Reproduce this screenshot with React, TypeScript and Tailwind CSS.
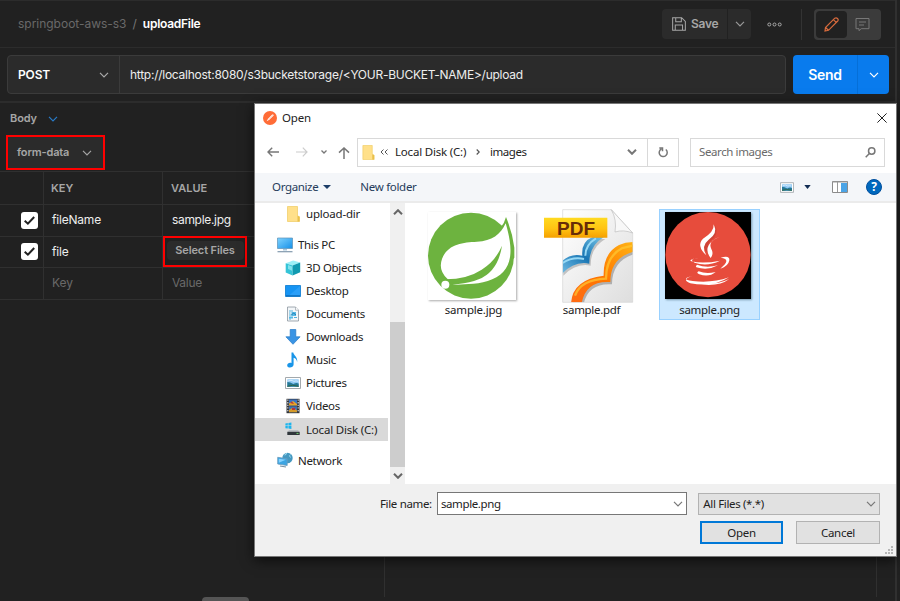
import React from "react";

type IconProps = { className?: string };

const Chevron = ({ className = "" }: IconProps) => (
  <svg viewBox="0 0 10 6" className={`h-[6px] w-[10px] shrink-0 fill-none stroke-current ${className}`} strokeWidth="1.2">
    <path d="M1 .8 5 4.8 9 .8" />
  </svg>
);

const PostmanLogo = () => (
  <svg viewBox="0 0 14 14" className="h-[14px] w-[14px] shrink-0">
    <circle cx="7" cy="7" r="7" fill="#ff6c37" />
    <path d="M3.6 10.2 5 7.7 9.2 3.6Q10.6 3 10.7 4.4L6.3 8.8Z" fill="#fff" />
    <path d="m5.3 8.4 4.6-4.3" stroke="#ffb59a" strokeWidth=".5" />
  </svg>
);

const FolderIcon = ({ className = "" }: IconProps) => (
  <svg viewBox="0 0 13 16" className={`shrink-0 ${className}`}>
    <path d="M.5.5h10v9.3l2 1v4.7H.5z" fill="#ffe08a" stroke="#efcc62" strokeWidth=".7" />
    <path d="M10.5 9.8v5.7h2v-4.7z" fill="#e9c04b" />
  </svg>
);

const PcIcon = () => (
  <svg viewBox="0 0 16 16" className="h-4 w-4">
    <defs>
      <linearGradient id="pc" x1="0" y1="0" x2="1" y2="1">
        <stop offset="0" stopColor="#7fd3ff" /><stop offset="1" stopColor="#1590e8" />
      </linearGradient>
    </defs>
    <path d="M.5 1h15v10.5H.5z" fill="url(#pc)" stroke="#5b8fb5" strokeWidth=".7" />
    <path d="M6 12h4v1.5H6z" fill="#a9c6da" /><path d="M.5 14.7h15" stroke="#8299ad" strokeWidth="1.2" />
  </svg>
);
const CubeIcon = () => (
  <svg viewBox="0 0 16 16" className="h-4 w-4">
    <path d="m.7 3.3 7.5-2.8 7 2L7.6 5.6z" fill="#9df0f7" />
    <path d="M.7 3.3 7.6 5.6v10L.7 12.6z" fill="#35c4d7" />
    <path d="M7.6 5.6 15.2 2.5v9.7l-7.6 3.4z" fill="#119ab0" />
    <path d="m3 5 4 1.5v4.2L3 9z" fill="#b4f6fb" opacity=".6" />
  </svg>
);
const DesktopIcon = () => (
  <svg viewBox="0 0 16 16" className="h-4 w-4">
    <path d="M.5 2.500h15v11H.5z" fill="#1694f3" stroke="#0879cf" strokeWidth=".8" />
    <path d="M15 3v9.500L4 12.500z" fill="#42adff" opacity=".45" /><path d="M1 12.800h14" stroke="#075ea6" strokeWidth=".8" />
  </svg>
);
const DocumentIcon = () => (
  <svg viewBox="0 0 16 16" className="h-4 w-4">
    <path d="M2.500 1h8L13.500 4.200V15h-11z" fill="#f4f7f9" stroke="#8b969e" strokeWidth=".8" />
    <path d="M10.500 1v3.200h3" fill="#fff" stroke="#8b969e" strokeWidth=".6" />
    <path d="M4 5h4M4 7h1.500M4 9h3M9 11.500h3M4 13h2" stroke="#57b3dd" strokeWidth="1.100" />
    <path d="M6.500 6H11v4H6.500zM4 10.500h4v2H4z" fill="#55b9e6" /><path d="m6.500 9 2-2 2.500 2" stroke="#217caf" fill="none" />
  </svg>
);
const DownloadIcon = () => (
  <svg viewBox="0 0 16 16" className="h-4 w-4">
    <path d="M5.2.5h5.6v7.3h4.3L8 15.3.9 7.8h4.3z" fill="#3a94e4" stroke="#2478c7" strokeWidth=".7" />
  </svg>
);
const MusicIcon = () => (
  <svg viewBox="0 0 16 16" className="h-4 w-4">
    <path d="M6.500.5h1.800c.3 3 4.700 4.200 3.800 9.500-.4-2.700-1.800-3.800-3.500-4.200v6.700c0 3.700-6.400 4.100-6.400.9 0-2.200 2.300-3.300 4.300-2.500z" fill="#1995e8" />
  </svg>
);
const PictureIcon = ({ className = "" }: IconProps) => (
  <svg viewBox="0 0 16 12" className={`shrink-0 ${className}`}>
    <path d="M.5.5h15v11H.5z" fill="#fff" stroke="#a3a9ad" />
    <path d="M2.3 2.3h11.4v7.4H2.3z" fill="#8ec8f3" />
    <path d="M2.3 5q3 .2 6 2 3-1.500 5.400-.5v3.200H2.300z" fill="#257897" />
    <path d="M3 4q3-1.7 6 .3 2-.8 4 0" stroke="#d7edff" fill="none" /><path d="M2.3 9.3q5-2 11.4 0" stroke="#2f6648" fill="none" />
  </svg>
);
const VideoIcon = () => (
  <svg viewBox="0 0 16 16" className="h-4 w-4">
    <path d="M1.5.8h13v14.4h-13z" fill="#32353b" /><path d="M4 1.5h8v6H4z" fill="#3a75c4" /><path d="M4 8.3h8v6H4z" fill="#3f70b3" />
    <path d="m4 5.4 4-2.4 4 3v1.5H4z" fill="#e6a42a" /><path d="m5 5 2-1.5L9 6z" fill="#b7323b" />
    <path d="m4 12 4-2.4 4 3v1.7H4z" fill="#d59b2a" /><path d="M7 10h3v2H7z" fill="#b7323b" />
    <path d="M2.8 1.5v13m10.4-13v13" stroke="#d2d4d6" strokeWidth="1.2" strokeDasharray="1.3 1.3" />
  </svg>
);
const DiskIcon = () => (
  <svg viewBox="0 0 16 16" className="h-4 w-4">
    <path d="m.4 2.4 2.4-.4v2.5H.4zm3-.5 3-.5v3.1h-3zM.4 5.1h2.4v2.5l-2.4-.4zm3 0h3v3l-3-.5z" fill="#1cb5ee" />
    <path d="M4 9h9l1.500 2h-12z" fill="#babfc3" /><path d="M2.300 10.800h12.400v3.200H2.300z" fill="#30363b" />
    <path d="M11.500 12.400h2" stroke="#70d66e" strokeWidth="1" />
  </svg>
);
const NetworkIcon = () => (
  <svg viewBox="0 0 16 16" className="h-4 w-4">
    <circle cx="10.500" cy="6" r="5.200" fill="#4598c0" /><path d="M7.500 3q2 0 2-2m4 1.500q-2 1 0 3" stroke="#9eddf3" strokeWidth="1" fill="none" />
    <path d="m.7 5.3 9.5 1.5v6.7L.7 12z" fill="#3ca5e3" stroke="#6b9cbc" strokeWidth=".8" />
    <path d="m1.8 6.7 7 1.1-7 3z" fill="#85d3ff" /><path d="m3 14 6 1" stroke="#7890a1" strokeWidth="1.2" />
  </svg>
);

const SpringThumb = () => (
  <svg viewBox="54 36 264 264" className="mr-[2px] h-[88px] w-[88px] bg-white shadow-[1px_1px_2px_#aaa]">
    <circle cx="183" cy="167" r="129" fill="#6db33f" />
    <path d="M270 85Q284 69 288 51q19 45 25 92v30l-30 30z" fill="#6db33f" />
    <path d="M112 236Q84 210 96 177c16-44 60-50 105-52 45-1 71-22 86-55 15 51 26 109-7 145-23 25-67 36-104 37l-48 3z" fill="#fff" />
    <path d="M276 137q-12 78-70 101-27 11-61 14-19 2-31 8l-8-22q67-1 109-29 41-25 61-72z" fill="#6db33f" />
    <circle cx="106" cy="254" r="12" fill="#fff" />
  </svg>
);

const PdfThumb = () => (
  <svg viewBox="402 28 270 282" className="mr-[2px] h-[94px] w-[90px]">
    <defs>
      <linearGradient id="page" x1="0" y1="0" x2="1" y2="1"><stop stopColor="#fff" /><stop offset="1" stopColor="#dedede" /></linearGradient>
      <linearGradient id="banner" x1="0" y1="0" x2="0" y2="1"><stop stopColor="#ffda20" /><stop offset=".55" stopColor="#ffc313" /><stop offset="1" stopColor="#f5a000" /></linearGradient>
      <linearGradient id="orange" x1="0" y1="1" x2="1" y2="0"><stop stopColor="#ff6a15" /><stop offset=".45" stopColor="#ff7600" /><stop offset="1" stopColor="#ffb414" /></linearGradient>
      <linearGradient id="blue" x1="0" y1="1" x2="1" y2="0"><stop stopColor="#71bce4" /><stop offset=".5" stopColor="#1976b4" /><stop offset="1" stopColor="#78c6e7" /></linearGradient>
      <clipPath id="pageClip"><path d="M458 30h146l64 70v208H458z" /></clipPath>
    </defs>
    <path d="M458 30h146l64 70v208H458z" fill="url(#page)" stroke="#d4d4d4" strokeWidth="2" />
    <g clipPath="url(#pageClip)">
      <path d="M456 222v-38q27-24 61-16-4-42 31-56h34q-45 26-44 80-44-9-82 30z" fill="#888" opacity=".45" transform="translate(4 6)" />
      <path d="M456 222v-38q27-24 61-16-4-42 31-56h34q-45 26-44 80-44-9-82 30z" fill="url(#blue)" />
      <path d="M458 190q29-19 64-12m4-10q0-33 32-52" stroke="#97d9f5" strokeWidth="6" fill="none" />
      <path d="M483 310q5-71 98-82-2-67 46-92 20-9 46-9v28q-72 19-72 92-73-5-86 63z" fill="#777" opacity=".5" transform="translate(5 7)" />
      <path d="M483 310q5-71 98-82-2-67 46-92 20-9 46-9v28q-72 19-72 92-73-5-86 63z" fill="url(#orange)" />
      <path d="M495 288q17-48 93-51 0-67 49-92l32-7" stroke="#ffc933" strokeWidth="7" fill="none" opacity=".7" />
    </g>
    <path d="m604 30 64 70q-28-11-53-3 6-37-11-67z" fill="#f8f8f8" stroke="#bcbcbc" strokeWidth="2" />
    <path d="M402 54h190v60H402z" fill="url(#banner)" />
    <text x="498" y="105" textAnchor="middle" fontSize="57" fontWeight="700" fill="#662c08" fontFamily="Liberation Sans, sans-serif" textLength="114" lengthAdjust="spacingAndGlyphs">PDF</text>
  </svg>
);

const JavaThumb = () => (
  <svg viewBox="74 37 258 261" className="mr-[3px] h-[87px] w-[86px] bg-black shadow-[1px_1px_2px_#7899ad]">
    <circle cx="203" cy="165" r="128" fill="#e74c3c" />
    <g transform="translate(3 3)" fill="#ac392f" opacity=".4">
      <path d="M221 74q14 28-14 47-17 18 4 44-51-33-14-57 26-14 24-34z" />
    </g>
    <g fill="#fff">
      <path d="M220 74q14 27-15 46-24 19-7 47-31-29-10-50 34-20 32-43z" />
      <path d="M239 111q-38 13-26 37 8 14-2 27-16-20-6-38 9-17 34-26z" />
      <path d="M174 175q-33 5-21 10 36 8 86-2-39 19-76 6-20-10 11-14z" />
      <path d="M241 174q28-8 26 8-3 18-27 25 17-14 18-22 1-9-17-11z" />
      <path d="M170 195q28 11 63 2-31 17-65 6-4-3 2-8zM175 215q23 9 51 2-20 17-49 7-11-4-2-9z" />
      <path d="M160 228q-45 10-3 16 58 7 109-11-48 31-116 18-31-13 10-23zM162 251q65 7 105-13-35 27-105 13z" />
    </g>
  </svg>
);

const tree = [
  { name: "3D Objects", icon: <CubeIcon /> },
  { name: "Desktop", icon: <DesktopIcon /> },
  { name: "Documents", icon: <DocumentIcon /> },
  { name: "Downloads", icon: <DownloadIcon /> },
  { name: "Music", icon: <MusicIcon /> },
  { name: "Pictures", icon: <PictureIcon className="h-3 w-4" /> },
  { name: "Videos", icon: <VideoIcon /> },
  { name: "Local Disk (C:)", icon: <DiskIcon />, selected: true },
];

const CheckCell = ({ checked = false }: { checked?: boolean }) => (
  <div className="flex items-center justify-end border-r border-[#303030] pr-[5px]">
    {checked && (
      <div className="mb-px h-[17px] w-[17px] rounded-[3px] bg-white">
        <svg viewBox="0 0 17 17" className="fill-none stroke-[#222]" strokeWidth="2"><path d="m3.700 8.700 3.200 3 6.300-6.700" /></svg>
      </div>
    )}
  </div>
);

function RequestPane() {
  return (
    <div className="flex h-full w-[897px] flex-col border-r-2 border-[#303030] text-[12px] text-[#eee]">
      <header className="flex h-12 shrink-0 items-center border-y border-[#2c2c2c] pl-[18px] pr-[14px]">
        <span className="tracking-[-0.02px] text-[#696969]">springboot-aws-s3</span>
        <span className="ml-[6px] text-[#777]">/</span>
        <span className="ml-[6px] font-semibold tracking-[-0.26px] text-white">uploadFile</span>
        <div className="ml-auto flex h-[30px] w-[65px] items-center rounded-l bg-[#2b2b2b] pl-[10px] text-[#a6a6a6]">
          <svg viewBox="0 0 15 15" className="h-[14px] w-[14px] fill-none stroke-current" strokeWidth="1.1">
            <path d="M.7.7h9.6l4 4v9.600H.7zM4 .7v4.500h6V.7M3.500 14.300V8.500h7.800v5.800" />
          </svg>
          <span className="ml-[5px] font-semibold tracking-[-0.25px]">Save</span>
        </div>
        <div className="ml-px flex h-[30px] w-[23px] items-center justify-center rounded-r bg-[#2b2b2b] text-[#999]"><Chevron className="w-[9px]" /></div>
        <svg viewBox="0 0 15 5" className="ml-[16px] h-[5px] w-[15px] fill-none stroke-[#aaa]"><circle cx="2.300" cy="2.500" r="1.500" /><circle cx="7.500" cy="2.500" r="1.500" /><circle cx="12.700" cy="2.500" r="1.500" /></svg>
        <div className="ml-[19px] h-[31px] w-px bg-[#333]" />
        <div className="ml-3 flex h-[31px] w-[67px] items-center rounded bg-[#3b3b3b] p-[2px]">
          <div className="flex h-[27px] w-[31px] items-center justify-center rounded bg-[#212121]">
            <svg viewBox="0 0 15 15" className="h-[15px] w-[15px] fill-none stroke-[#d86b3d]" strokeWidth="1.2"><path d="m1 14 .5-3.500L10.800 1.200q1.400-1 2.700.300t.2 2.500L4.500 13.300zM9.400 2.600l3 3M1.500 10.500l3 2.800" /></svg>
          </div>
          <svg viewBox="0 0 15 15" className="ml-[8px] h-[15px] w-[15px] fill-none stroke-[#787878]"><path d="M1 1.500h13v10.200H6.200L4 13.700v-2H1zM4 5h7M4 8h5" /></svg>
        </div>
      </header>
      <div className="flex h-[55px] shrink-0 items-center border-b-2 border-[#2c2c2c] pl-[7px] pr-[6px]">
        <div className="flex h-[39px] w-[779px] rounded border border-[#3b3b3b] bg-[#2b2b2b]">
          <div className="flex w-[112px] items-center justify-between border-r border-[#3b3b3b] pl-[10px] pr-[10px] text-[#aaa]">
            <span className="font-semibold tracking-[-0.15px] text-white">POST</span><Chevron />
          </div>
          <span className="self-center whitespace-nowrap pl-[10px] tracking-[-0.26px]">http://localhost:8080/s3bucketstorage/&lt;YOUR-BUCKET-NAME&gt;/upload</span>
        </div>
        <div className="ml-[7px] flex h-[39px] w-[96px] overflow-hidden rounded bg-[#097bed] text-white">
          <div className="flex w-[65px] items-center justify-center border-r border-[#056fd8] text-[14px] font-semibold tracking-[-0.35px]">Send</div>
          <div className="flex flex-1 items-center justify-center"><Chevron className="w-[9px]" /></div>
        </div>
      </div>
      <div className="flex h-[32px] shrink-0 items-center pb-px pl-[10px] text-[11px] font-semibold tracking-[-0.1px] text-[#a6a6a6]">Body<Chevron className="ml-[11px] text-[#287bc8]" /></div>
      <div className="ml-[6px] flex h-[35px] w-[99px] shrink-0 items-center border-2 border-[#ff0000] bg-[#2b2b2b] pl-[9px] text-[11px] font-semibold tracking-[-0.15px] text-[#a6a6a6]">form-data<Chevron className="ml-[13px] w-[9px]" /></div>
      <div className="mt-[1px] grid shrink-0 grid-cols-[44px_119px_1fr] grid-rows-[33px_32px_31px_32px] border-t border-[#303030] [&>*]:border-b [&>*]:border-[#303030]">
        <CheckCell />
        <div className="flex items-center border-r pl-[7px] text-[11px] font-semibold text-[#a6a6a6]">KEY</div>
        <div className="flex items-center pl-[8px] text-[11px] font-semibold text-[#a6a6a6]">VALUE</div>
        <CheckCell checked />
        <div className="flex items-center border-r pb-px pl-[8px] tracking-[-0.2px]">fileName</div>
        <div className="flex items-center pb-px pl-[9px] tracking-[-0.32px]">sample.jpg</div>
        <CheckCell checked />
        <div className="flex items-center border-r pl-[8px] tracking-[-0.2px]">file</div>
        <div className="flex items-center">
          <div className="-mb-px -mt-[3px] flex h-[31px] w-[84px] items-start justify-center border-2 border-[#ff0000] pt-[3px]"><span className="flex h-[19px] w-[77px] items-center justify-center rounded-sm bg-[#2b2b2b] text-[11px] font-semibold tracking-[-0.12px] text-[#a6a6a6]">Select Files</span></div>
        </div>
        <CheckCell />
        <div className="flex items-center border-r pb-px pl-[8px] text-[#696969]">Key</div>
        <div className="flex items-center pb-px pl-[9px] tracking-[-0.3px] text-[#696969]">Value</div>
      </div>
      <div className="mt-auto flex h-[300px] w-full items-end">
        <div className="flex w-[384px] items-end pl-[202px]"><div className="h-1 w-[47px] rounded-t-sm bg-[#555]" /></div>
        <div className="mb-1 h-[296px] w-[493px] border-x border-[#303030]" />
      </div>
    </div>
  );
}

function OpenDialog() {
  return (
    <section className="absolute left-[254px] top-[103px] flex h-[454px] w-[643px] flex-col border border-[#777] bg-white font-['Noto_Sans','Open_Sans',sans-serif] text-[11.5px] text-[#222] shadow-[0_3px_12px_#000a]">
      <div className="flex h-[27px] shrink-0 items-center pl-[8px] pr-[9px]">
        <PostmanLogo /><span className="ml-[5px] tracking-[-0.2px]">Open</span>
        <svg viewBox="0 0 10 10" className="ml-auto h-[10px] w-[10px] stroke-[#222]"><path d="m.4.4 9.200 9.200m0-9.200L.4 9.600" /></svg>
      </div>
      <div className="flex h-[42px] shrink-0 items-center pl-[12px] pr-[11px]">
        <svg viewBox="0 0 12 10" className="h-[10px] w-[12px] fill-none stroke-[#777]" strokeWidth="1.4"><path d="M12 5H1m4.200-4.300L1 5l4.200 4.300" /></svg>
        <svg viewBox="0 0 12 10" className="ml-[17px] h-[10px] w-[12px] fill-none stroke-[#ccc]" strokeWidth="1.2"><path d="M0 5h11M6.800.7 11 5 6.800 9.300" /></svg>
        <svg viewBox="0 0 6 4" className="ml-[13px] h-[4px] w-[6px] fill-none stroke-[#777]" strokeWidth="1.300"><path d="m.5.5 2.500 2.500L5.500.5" /></svg>
        <svg viewBox="0 0 12 12" className="ml-[11px] mt-[1px] h-3 w-3 fill-none stroke-[#777]" strokeWidth="1.500"><path d="M6 12V1M1 5.600 6 1l5 4.600" /></svg>
        <div className="ml-[7px] flex h-[29px] w-[322px] shrink-0 items-center border border-[#d9d9d9] pl-[4px]">
          <FolderIcon className="h-[15px] w-[13px]" />
          <svg viewBox="0 0 8 6" className="ml-[5px] h-[6px] w-[8px] fill-none stroke-[#555]"><path d="M3.500.5 1 3l2.500 2.500m4-5L5 3l2.500 2.500" /></svg>
          <span className="ml-[7px] w-[73px] whitespace-nowrap tracking-[-0.2px]">Local Disk (C:)</span>
          <svg viewBox="0 0 4 6" className="ml-[8px] h-[6px] w-[4px] fill-none stroke-[#555]" strokeWidth="1.200"><path d="m.7.5 2.500 2.500L.7 5.500" /></svg>
          <span className="ml-[10px] tracking-[-0.45px]">images</span>
          <Chevron className="ml-auto w-[9px] text-[#777] stroke-2" />
          <div className="ml-[10px] flex h-full w-[31px] items-center justify-center border-l border-[#d9d9d9]">
            <svg viewBox="0 0 10 11" className="h-[11px] w-[10px] fill-none stroke-[#777]" strokeWidth="1.500"><path d="M7.800 2.500A4 4 0 1 1 3.400 2M1.300 1h3.200v3.300" /></svg>
          </div>
        </div>
        <div className="ml-[11px] flex h-[29px] flex-1 items-center border border-[#d9d9d9] pl-2 pr-[8px] text-[#6a6a6a]">
          <span className="tracking-[-0.4px]">Search images</span>
          <svg viewBox="0 0 11 11" className="ml-auto h-[11px] w-[11px] fill-none stroke-[#777]" strokeWidth="1.500"><circle cx="6.700" cy="4" r="3.200" /><path d="M4.400 6.400.7 10.200" /></svg>
        </div>
      </div>
      <div className="flex h-[30px] shrink-0 items-center border-b-2 border-[#ebebeb] bg-[#f4f6f9] pl-[17px] pr-[14px] text-[#253c5b]">
        <span className="tracking-[-0.35px]">Organize</span>
        <svg viewBox="0 0 8 4" className="ml-[5px] h-1 w-2 fill-[#1c3d68]"><path d="M0 0h8L4 4z" /></svg>
        <span className="ml-[29px] tracking-[-0.3px]">New folder</span>
        <PictureIcon className="ml-auto h-[11px] w-[14px]" />
        <svg viewBox="0 0 8 5" className="ml-[10px] h-[4px] w-[7px] fill-[#122d54]"><path d="M0 0h8L4 5z" /></svg>
        <svg viewBox="0 0 16 12" className="ml-[21px] h-[12px] w-[16px]"><path d="M.5.5h15v11H.5z" fill="#fff" stroke="#8b8b8b" /><path d="M.5 1h15M5.500 1v10" stroke="#999" /><path d="M9 2h6v9H9z" fill="#4ba4e6" /></svg>
        <span className="ml-[18px] flex h-[16px] w-[16px] items-center justify-center rounded-full border border-[#004f9e] bg-[#0068bd] text-[12px] font-bold text-white">?</span>
      </div>
      <div className="flex h-[281px] shrink-0">
        <div className="w-[133px] shrink-0 tracking-[-0.33px]">
          <div className="flex h-[23px] items-center pb-px pl-[32px]"><FolderIcon className="h-4 w-[13px]" /><span className="ml-[6px] tracking-[-0.2px]">upload-dir</span></div>
          <div className="mt-[7px] flex h-[23px] items-center pl-[22px]"><PcIcon /><span className="ml-[5px]">This PC</span></div>
          {tree.map((item) => (
            <div key={item.name} className={`flex h-[23.100px] items-center pl-[30px] ${item.selected ? "bg-[#d9d9d9]" : ""}`}>
              {item.icon}<span className={`ml-[5px] whitespace-nowrap ${item.selected ? "tracking-[-0.2px]" : ""}`}>{item.name}</span>
            </div>
          ))}
          <div className="mt-[8px] flex h-[23px] items-center pl-[22px]"><NetworkIcon /><span className="ml-[5px]">Network</span></div>
        </div>
        <div className="ml-[2px] flex w-[15px] shrink-0 flex-col items-center justify-between bg-[#f0f0f0] text-[#666]">
          <div className="flex h-[17px] items-center"><Chevron className="w-[9px] rotate-180 stroke-2" /></div>
          <div className="mt-[102px] h-[145px] w-full bg-[#cdcdcd]" />
          <div className="flex h-[17px] items-center"><Chevron className="w-[9px] stroke-2" /></div>
        </div>
        <div className="flex pl-[13px] pt-[6px]">
          <div className="flex h-[111px] w-[110px] flex-col items-center pt-[3px]"><SpringThumb /><span className="ml-[1px] mt-[1px] leading-[18px] tracking-[-0.2px]">sample.jpg</span></div>
          <div className="ml-[6px] flex h-[111px] w-[111px] flex-col items-center"><PdfThumb /><span className="-mt-[2px] ml-[4px] leading-[18px] tracking-[-0.3px]">sample.pdf</span></div>
          <div className="ml-[14px] flex h-[111px] w-[101px] flex-col items-center border border-[#99d1ff] bg-[#cce8ff] pt-[2px]"><JavaThumb /><span className="mt-[2px] leading-[18px] tracking-[-0.3px]">sample.png</span></div>
        </div>
      </div>
      <div className="relative flex flex-1 flex-col bg-[#f0f0f0] pl-[125px] pr-[16px] pt-[8px]">
        <div className="flex h-[23px] items-center">
          <span className="w-[57px] whitespace-nowrap tracking-[-0.35px]">File name:</span>
          <div className="flex h-[23px] w-[251px] items-center justify-between border border-[#777] bg-white pl-[3px] pr-[3px]"><span className="pt-px tracking-[-0.38px]">sample.png</span><Chevron className="text-[#777]" /></div>
          <div className="ml-[11px] flex h-[22px] w-[182px] items-center justify-between border border-[#b2b2b2] bg-[#e1e1e1] pl-[4px] pr-[3px]"><span className="tracking-[-0.35px]">All Files (*.*)</span><Chevron className="text-[#777]" /></div>
        </div>
        <div className="mt-[6px] flex justify-end gap-[13px]">
          <button className="h-[23px] w-[83px] border-2 border-[#0078d7] bg-[#e1e1e1] leading-[18px] tracking-[-0.3px]">Open</button>
          <button className="h-[23px] w-[84px] border border-[#b2b2b2] bg-[#e1e1e1] leading-[20px] tracking-[-0.3px]">Cancel</button>
        </div>
        <svg viewBox="0 0 9 9" className="absolute bottom-[1px] right-[2px] h-[9px] w-[9px] fill-[#b5b5b5]"><path d="M6 0h2v2H6zM3 3h2v2H3zm3 0h2v2H6zM0 6h2v2H0zm3 0h2v2H3zm3 0h2v2H6z" /></svg>
      </div>
    </section>
  );
}

export default function App() {
  return (
    <main className="relative h-[601px] w-[900px] overflow-hidden bg-[#212121] font-['Inter',sans-serif]">
      <RequestPane />
      <OpenDialog />
    </main>
  );
}
